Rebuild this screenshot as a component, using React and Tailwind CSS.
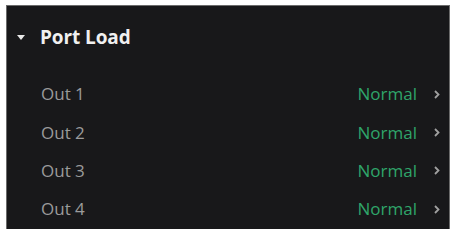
export default function App() {
  const rows = ["Out 1", "Out 2", "Out 3", "Out 4"];
  return (
    <div className="w-[454px] h-[229px] bg-white pt-[5px] pl-[6px] pr-[4px] overflow-hidden" style={{ fontFamily: '"Open Sans", "Noto Sans", sans-serif' }}>
      <div className="h-[240px] bg-[#18181a] border-l border-r border-t border-[#6b6b6b]">
        <div className="flex items-center h-[63px] pl-[10px]">
          <svg width="8" height="6" viewBox="0 0 8 6" className="mr-[15px] mt-[1px]">
            <polygon points="0,0 8,0 4,5" fill="#e8e8e8" />
          </svg>
          <span className="text-[19px] font-bold text-[#f0f0f0] tracking-[-0.1px]">Port Load</span>
        </div>
        <div className="flex flex-col pt-[6px]">
          {rows.map((r) => (
            <div key={r} className="flex items-center h-[38.3px] pl-[34px] pr-[9px]">
              <span className="text-[17px] text-[#9b9b9b] flex-1">{r}</span>
              <span className="text-[17px] text-[#2fa56a]">Normal</span>
              <svg width="6" height="9" viewBox="0 0 6 9" className="ml-[17px]">
                <polyline points="1,1 4.5,4.5 1,8" fill="none" stroke="#a0a0a0" strokeWidth="1.8" />
              </svg>
            </div>
          ))}
        </div>
      </div>
    </div>
  );
}
